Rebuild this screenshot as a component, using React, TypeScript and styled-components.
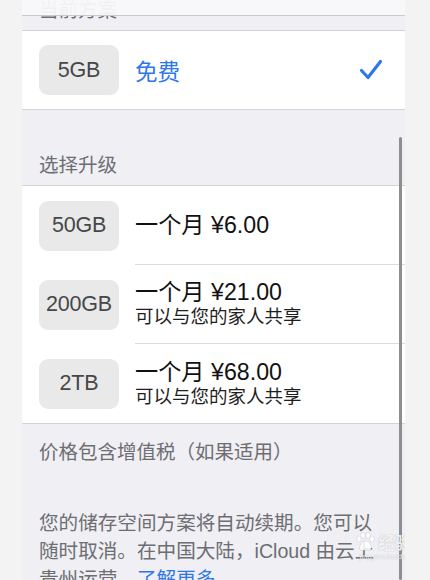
import React from "react";
import styled, { createGlobalStyle } from "styled-components";

const GlobalStyle = createGlobalStyle`
  html, body { margin: 0; padding: 0; }
  body {
    background: #f3f3f4;
    font-family: "Liberation Sans", "Noto Sans CJK SC", sans-serif;
    -webkit-font-smoothing: antialiased;
  }
`;

const Screen = styled.div`
  position: relative;
  width: 383px;
  height: 580px;
  margin-left: 22px;
  background: #efeff4;
  overflow: hidden;
`;

const NavBar = styled.div`
  position: absolute;
  top: 0;
  left: 0;
  right: 0;
  height: 15px;
  background: rgba(249, 249, 250, 0.94);
  border-bottom: 1px solid #c9c9cd;
  z-index: 2;
`;

const SectionHeader = styled.div<{ $top: number }>`
  padding: ${(p) => p.$top}px 17px 10px;
  font-size: 19.5px;
  line-height: 20px;
  color: #6d6d72;
`;

const Group = styled.div`
  background: #ffffff;
  border-top: 1px solid #d3d3d7;
  border-bottom: 1px solid #d3d3d7;
`;

const Row = styled.div<{ $h: number }>`
  display: flex;
  align-items: stretch;
  height: ${(p) => p.$h}px;
  padding-left: 17px;
`;

const BadgeCell = styled.div`
  display: flex;
  align-items: center;
  padding-right: 16px;
`;

const Badge = styled.div`
  width: 80px;
  height: 50px;
  border-radius: 9px;
  background: #e9e9ea;
  color: #474747;
  font-size: 21.5px;
  display: flex;
  align-items: center;
  justify-content: center;
  letter-spacing: -0.2px;
`;

const Content = styled.div<{ $sep: boolean }>`
  flex: 1;
  display: flex;
  align-items: center;
  justify-content: space-between;
  padding-right: 22px;
  border-bottom: ${(p) => (p.$sep ? "1px solid #dcdce0" : "none")};
`;

const TextStack = styled.div`
  display: flex;
  flex-direction: column;
`;

const FreeLabel = styled.div`
  font-size: 22.5px;
  color: #3077e8;
`;

const Price = styled.div`
  font-size: 23.2px;
  line-height: 25px;
  color: #111;
`;

const Sub = styled.div`
  font-size: 18.5px;
  line-height: 23px;
  color: #1e1e1e;
`;

const Note = styled.div`
  padding: 18px 17px 0;
  font-size: 19.5px;
  line-height: 20px;
  color: #6d6d72;
`;

const Paragraph = styled.p`
  margin: 47px 0 0;
  padding: 0 17px;
  font-size: 19.6px;
  line-height: 28px;
  color: #6d6d72;
  white-space: nowrap;
`;

const Link = styled.span`
  color: #3077e8;
`;

const ScrollBar = styled.div`
  position: absolute;
  left: 377px;
  top: 137px;
  bottom: 0;
  width: 3px;
  border-radius: 2px;
  background: #8e8e90;
  z-index: 3;
`;

const Watermark = styled.div`
  position: absolute;
  left: 290px;
  top: 524px;
  width: 100px;
  display: flex;
  flex-direction: column;
  align-items: flex-end;
  pointer-events: none;
  z-index: 4;
`;

const WmTitle = styled.div`
  font-family: "Noto Sans CJK SC", sans-serif;
  font-size: 17px;
  line-height: 18px;
  font-weight: 700;
  color: rgba(255, 255, 255, 0.85);
  text-shadow: 0 0 1px rgba(120, 120, 120, 0.6);
  display: flex;
  align-items: center;
  gap: 2px;
  margin-top: 8px;
`;

const WmUrl = styled.div`
  font-size: 8px;
  line-height: 9px;
  color: rgba(255, 255, 255, 0.85);
  text-shadow: 0 0 1px rgba(120, 120, 120, 0.5);
  margin-right: -12px;
`;

const Check = () => (
  <svg width="24" height="22" viewBox="0 0 24 22" fill="none">
    <path
      d="M2.5 11.5 L9 18.5 L21.5 2.5"
      stroke="#3077e8"
      strokeWidth="3.2"
      strokeLinecap="round"
      strokeLinejoin="round"
    />
  </svg>
);

const Paw = () => (
  <svg width="22" height="20" viewBox="0 0 22 20">
    <g fill="rgba(255,255,255,0.85)" stroke="rgba(140,140,140,0.35)" strokeWidth="0.6">
      <ellipse cx="5" cy="7" rx="2.4" ry="3" />
      <ellipse cx="9" cy="3.5" rx="2.4" ry="3" />
      <ellipse cx="14" cy="3.5" rx="2.4" ry="3" />
      <ellipse cx="18" cy="7" rx="2.4" ry="3" />
      <path d="M11.5 9 C7 9 5 14 6 17 C7 19.5 10 18 11.5 18 C13 18 16 19.5 17 17 C18 14 16 9 11.5 9 Z" />
    </g>
  </svg>
);

type Plan = { size: string; price: string; family?: boolean };

const plans: Plan[] = [
  { size: "50GB", price: "一个月 ¥6.00" },
  { size: "200GB", price: "一个月 ¥21.00", family: true },
  { size: "2TB", price: "一个月 ¥68.00", family: true },
];

export default function App() {
  return (
    <>
      <GlobalStyle />
      <Screen>
        <NavBar />
        <SectionHeader $top={0}>当前方案</SectionHeader>
        <Group>
          <Row $h={78}>
            <BadgeCell>
              <Badge>5GB</Badge>
            </BadgeCell>
            <Content $sep={false}>
              <FreeLabel>免费</FreeLabel>
              <Check />
            </Content>
          </Row>
        </Group>
        <SectionHeader $top={45}>选择升级</SectionHeader>
        <Group>
          {plans.map((p, i) => (
            <Row $h={79} key={p.size}>
              <BadgeCell>
                <Badge>{p.size}</Badge>
              </BadgeCell>
              <Content $sep={i < plans.length - 1}>
                <TextStack>
                  <Price>{p.price}</Price>
                  {p.family && <Sub>可以与您的家人共享</Sub>}
                </TextStack>
              </Content>
            </Row>
          ))}
        </Group>
        <Note>价格包含增值税（如果适用）</Note>
        <Paragraph>
          您的储存空间方案将自动续期。您可以
          <br />
          随时取消。在中国大陆，iCloud 由云上
          <br />
          贵州运营。<Link>了解更多</Link>
        </Paragraph>
        <ScrollBar />
        <Watermark>
          <WmTitle>
            <Paw />
            经验
          </WmTitle>
          <WmUrl>jingyan.baidu.com</WmUrl>
        </Watermark>
      </Screen>
    </>
  );
}
